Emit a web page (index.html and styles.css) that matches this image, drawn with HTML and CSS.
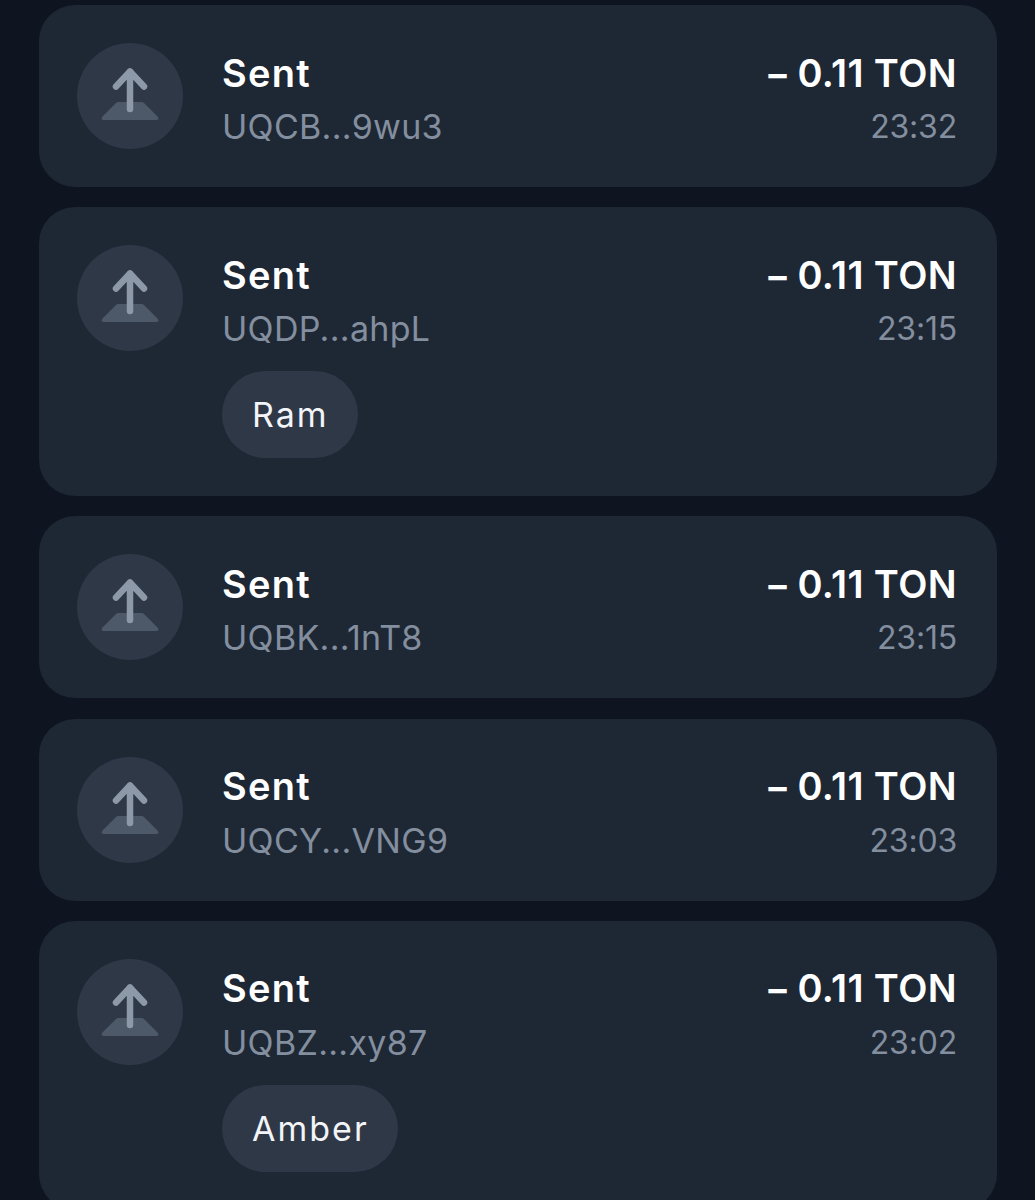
FILE: index.html
```html
<!DOCTYPE html>
<html lang="en">
<head>
    <meta charset="UTF-8">
    <meta name="viewport" content="width=device-width, initial-scale=1.0">
    <title>History</title>
    <link rel="stylesheet" href="styles.css">
</head>
<body>
    <svg class="icon-defs" width="0" height="0" aria-hidden="true">
        <symbol id="sent-icon" viewBox="0 0 64 64">
            <path class="icon-base" d="M20.500 38 H43.500 Q45 38 46 39 L59.500 52.500 Q62 56 58 56 H6 Q2 56 4.500 52.500 L18 39 Q19 38 20.500 38 Z"/>
            <path class="icon-arrow" d="M32 45 V7.500 M18 22.500 L32 7.500 L46 22.500"/>
        </symbol>
    </svg>

    <div class="list">
        <div class="card">
            <div class="circle"><svg class="arrow"><use href="#sent-icon"/></svg></div>
            <div class="body">
                <div class="row">
                    <span class="title">Sent</span>
                    <span class="amount">&minus;&thinsp;0.11 TON</span>
                </div>
                <div class="row sub-row">
                    <span class="addr">UQCB...9wu3</span>
                    <span class="time">23:32</span>
                </div>
            </div>
        </div>

        <div class="card">
            <div class="circle"><svg class="arrow"><use href="#sent-icon"/></svg></div>
            <div class="body">
                <div class="row">
                    <span class="title">Sent</span>
                    <span class="amount">&minus;&thinsp;0.11 TON</span>
                </div>
                <div class="row sub-row">
                    <span class="addr">UQDP...ahpL</span>
                    <span class="time">23:15</span>
                </div>
                <span class="pill">Ram</span>
            </div>
        </div>

        <div class="card">
            <div class="circle"><svg class="arrow"><use href="#sent-icon"/></svg></div>
            <div class="body">
                <div class="row">
                    <span class="title">Sent</span>
                    <span class="amount">&minus;&thinsp;0.11 TON</span>
                </div>
                <div class="row sub-row">
                    <span class="addr">UQBK...1nT8</span>
                    <span class="time">23:15</span>
                </div>
            </div>
        </div>

        <div class="card">
            <div class="circle"><svg class="arrow"><use href="#sent-icon"/></svg></div>
            <div class="body">
                <div class="row">
                    <span class="title">Sent</span>
                    <span class="amount">&minus;&thinsp;0.11 TON</span>
                </div>
                <div class="row sub-row">
                    <span class="addr">UQCY...VNG9</span>
                    <span class="time">23:03</span>
                </div>
            </div>
        </div>

        <div class="card">
            <div class="circle"><svg class="arrow"><use href="#sent-icon"/></svg></div>
            <div class="body">
                <div class="row">
                    <span class="title">Sent</span>
                    <span class="amount">&minus;&thinsp;0.11 TON</span>
                </div>
                <div class="row sub-row">
                    <span class="addr">UQBZ...xy87</span>
                    <span class="time">23:02</span>
                </div>
                <span class="pill">Amber</span>
            </div>
        </div>
    </div>
</body>
</html>
```

FILE: styles.css
```css
* {
    margin: 0;
    padding: 0;
    box-sizing: border-box;
    font-family: Inter, "Noto Sans", sans-serif;
}

html, body {
    height: 1200px;
    overflow: hidden;
}

body {
    background: #0e1520;
}

.icon-defs {
    display: block;
    height: 0;
}

.list {
    display: flex;
    flex-direction: column;
    gap: 20.200px;
    padding: 5px 38px 0 39px;
}

.card {
    display: flex;
    gap: 39px;
    padding: 38px 40px 38px 38px;
    background: #1e2734;
    border-radius: 36px;
}

.circle {
    flex: none;
    display: flex;
    align-items: center;
    justify-content: center;
    width: 106px;
    height: 106px;
    border-radius: 50%;
    background: #2e3847;
}

.arrow {
    width: 64px;
    height: 64px;
}

.icon-base {
    fill: #4d5868;
}

.icon-arrow {
    fill: none;
    stroke: #8d98a9;
    stroke-width: 6.500;
    stroke-linecap: round;
    stroke-linejoin: round;
}

.body {
    flex: 1;
    min-width: 0;
}

.row {
    display: flex;
    justify-content: space-between;
    align-items: center;
    height: 53px;
    margin-top: 3px;
}

.sub-row {
    margin-top: 0;
    padding-top: 5px;
    height: 50px;
}

.title, .amount {
    color: #ffffff;
    font-size: 38px;
    font-weight: 600;
}

.title {
    letter-spacing: 1.300px;
}

.amount {
    letter-spacing: 0.400px;
}

.addr {
    color: #838e9e;
    font-size: 34px;
    letter-spacing: 0.300px;
}

.time {
    color: #838e9e;
    font-size: 32px;
    letter-spacing: -0.200px;
}

.pill {
    display: inline-block;
    margin-top: 20px;
    padding: 0 29px 0 30px;
    height: 87px;
    line-height: 87px;
    border-radius: 44px;
    background: #2e3847;
    color: #f2f4f7;
    font-size: 34px;
    letter-spacing: 2px;
}
```
